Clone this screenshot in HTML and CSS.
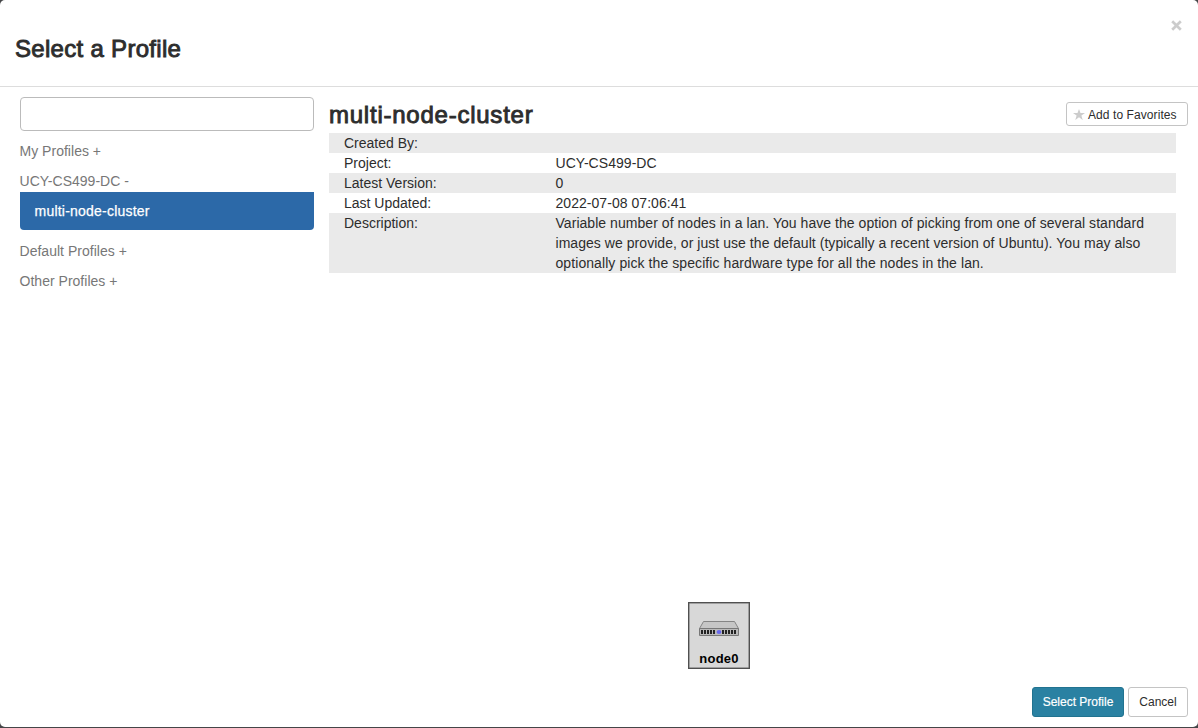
FILE: index.html
```
<!DOCTYPE html>
<html lang="en">
<head>
<meta charset="utf-8">
<title>Select a Profile</title>
<link rel="stylesheet" href="styles.css">
</head>
<body>
<div class="modal">
  <header class="modal-header">
    <h3 class="heading">Select a Profile</h3>
    <button class="close" aria-label="Close"><svg width="11" height="11" viewBox="0 0 11 11"><path d="M1.200 1.200 9.800 9.800M9.800 1.200 1.200 9.800" stroke="#ccc" stroke-width="2.700"/></svg></button>
  </header>
  <main class="modal-body">
    <nav class="sidebar">
      <input class="search" type="text" aria-label="Search profiles">
      <a class="group">My Profiles +</a>
      <a class="group">UCY-CS499-DC -</a>
      <a class="item">multi-node-cluster</a>
      <a class="group">Default Profiles +</a>
      <a class="group">Other Profiles +</a>
    </nav>
    <section class="details">
      <div class="details-head">
        <h3 class="heading heading-name">multi-node-cluster</h3>
        <button class="btn btn-fav"><svg width="12" height="11" viewBox="0 0 12 11"><path d="M6 0 7.5 4H12L8.4 6.6 9.7 11 6 8.3 2.3 11 3.6 6.6 0 4H4.5Z" fill="#ccc"/></svg><span>Add to Favorites</span></button>
      </div>
      <dl class="info">
        <div class="row"><dt>Created By:</dt><dd></dd></div>
        <div class="row"><dt>Project:</dt><dd>UCY-CS499-DC</dd></div>
        <div class="row"><dt>Latest Version:</dt><dd>0</dd></div>
        <div class="row"><dt>Last Updated:</dt><dd>2022-07-08 07:06:41</dd></div>
        <div class="row"><dt>Description:</dt><dd>Variable number of nodes in a lan. You have the option of picking from one of several standard<br>images we provide, or just use the default (typically a recent version of Ubuntu). You may also<br><span class="last-line">optionally pick the specific hardware type for all the nodes in the lan.</span></dd></div>
      </dl>
      <div class="topology">
        <div class="node">
          <svg class="server" width="42" height="16" viewBox="0 0 42 16">
            <path d="M5.500 0.500H36.500L40.500 7.500H1.500Z" fill="#c6c6c6" stroke="#858585"/>
            <path d="M1.500 7.500H40.500V14.500H1.500Z" fill="#b9b9b9" stroke="#777"/>
            <path d="M3 11H18M24 11H39" stroke="#222" stroke-width="4" stroke-dasharray="2 1"/>
            <ellipse cx="21" cy="11" rx="2.400" ry="1.900" fill="#6868ee"/>
          </svg>
          <span class="node-name">node0</span>
        </div>
      </div>
    </section>
  </main>
  <footer class="modal-footer">
    <button class="btn btn-primary">Select Profile</button>
    <button class="btn btn-cancel">Cancel</button>
  </footer>
</div>
</body>
</html>
```

FILE: styles.css
```
* { box-sizing: border-box; }
body {
  margin: 0;
  height: 728px;
  overflow: hidden;
  background: #454648;
  color: #2d2d2d;
  font: 14px/20px "Liberation Sans", Arial, sans-serif;
}
.modal {
  display: flex;
  flex-direction: column;
  height: 727px;
  background: #fff;
  border-radius: 5px;
}
.modal-header {
  display: flex;
  justify-content: space-between;
  align-items: flex-start;
  height: 87px;
  padding: 36px 16px 0 15px;
  border-bottom: 1px solid #ddd;
}
.heading {
  margin: 0;
  font-size: 24px;
  line-height: 26px;
  font-weight: 400;
  letter-spacing: 0.3px;
  -webkit-text-stroke: 0.9px #2d2d2d;
}
.heading-name { letter-spacing: 0.76px; }
.close {
  display: flex;
  margin-top: -16px;
  padding: 0;
  border: 0;
  background: none;
}
.modal-body {
  display: flex;
  gap: 15px;
  flex: 1;
  padding: 10px 10px 0 20px;
}
.sidebar {
  display: flex;
  flex-direction: column;
  width: 294px;
}
.search {
  height: 34px;
  border: 1px solid #bbb;
  border-radius: 4px;
  background: #fff;
}
.group {
  margin-top: 10px;
  margin-left: -0.5px;
  color: #777;
  letter-spacing: 0.02px;
}
.item {
  height: 38px;
  margin: 1px 0;
  padding: 9px 14.5px;
  border-radius: 0 0 4px 4px;
  background: #2c69a8;
  color: #fff;
  letter-spacing: 0.22px;
  -webkit-text-stroke: 0.25px #fff;
}
.details {
  display: flex;
  flex-direction: column;
  flex: 1;
}
.details-head {
  display: flex;
  justify-content: space-between;
  height: 36px;
  padding-top: 5px;
}
.btn {
  display: flex;
  align-items: center;
  justify-content: center;
  padding: 0;
  border: 1px solid #c4c4c4;
  border-radius: 3px;
  background: #fff;
  color: #2d2d2d;
  font: 12px/18px "Liberation Sans", Arial, sans-serif;
}
.btn-fav {
  gap: 3px;
  justify-content: flex-start;
  width: 122px;
  height: 24px;
  padding: 1px 0 0 6px;
  letter-spacing: 0.08px;
}
.info {
  width: 847px;
  margin: 0;
}
.row {
  display: grid;
  grid-template-columns: 211.5px 1fr;
  min-height: 20px;
  padding-left: 15px;
}
.row:nth-child(odd) { background: #eaeaea; }
.row dd { margin: 0; white-space: nowrap; letter-spacing: 0.045px; }
.last-line { letter-spacing: 0.08px; }
.topology {
  display: flex;
  flex: 1;
  align-items: flex-end;
  padding: 0 0 8px 359px;
}
.node {
  display: flex;
  flex-direction: column;
  align-items: center;
  width: 62px;
  height: 67px;
  padding-top: 18px;
  border: 1px solid #505050;
  box-shadow: inset 0 0 0 0.5px #666;
  background: #d8d8d8;
}
.server { flex: none; }
.node-name {
  margin-top: 13px;
  color: #000;
  font-size: 13px;
  line-height: 18px;
  font-weight: 700;
  letter-spacing: 0.2px;
}
.modal-footer {
  display: flex;
  justify-content: flex-end;
  gap: 4px;
  height: 50px;
  padding: 10px 10px 0 0;
}
.modal-footer .btn { height: 30px; }
.btn-primary {
  width: 92px;
  border-color: #217390;
  background: #2a81a2;
  color: #fff;
  -webkit-text-stroke: 0.2px #fff;
}
.btn-cancel { width: 60px; }
```
